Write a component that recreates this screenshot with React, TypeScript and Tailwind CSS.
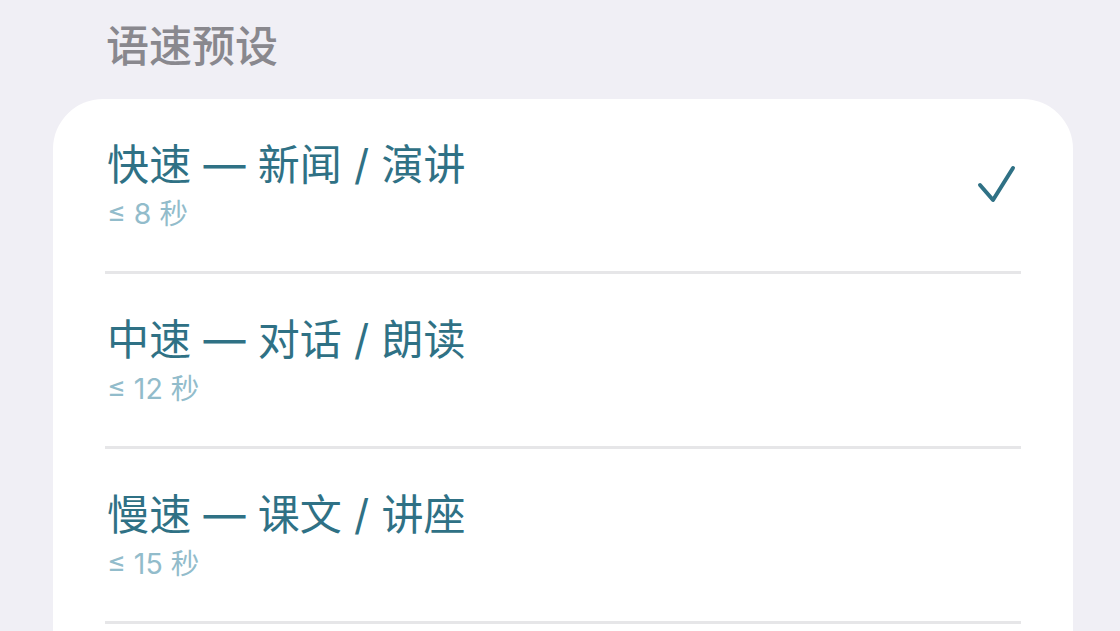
const PRESETS = [
  { title: '快速 — 新闻 / 演讲', limit: '≤ 8 秒', selected: true },
  { title: '中速 — 对话 / 朗读', limit: '≤ 12 秒', selected: false },
  { title: '慢速 — 课文 / 讲座', limit: '≤ 15 秒', selected: false },
];

function CheckMark() {
  return (
    <svg width="40" height="40" viewBox="0 0 40 40" fill="none" className="shrink-0">
      <polyline
        points="3,20 16,35 36,3"
        stroke="#2f7185"
        strokeWidth="4"
        strokeLinecap="round"
        strokeLinejoin="round"
      />
    </svg>
  );
}

export default function App() {
  return (
    <div
      className="h-[631px] w-[1120px] overflow-hidden bg-[#f0eff5]"
      style={{ fontFamily: 'Inter, "Noto Sans CJK SC", sans-serif' }}
    >
      <h2 className="pl-[106px] pt-[18px] text-[43px] font-medium leading-[56px] text-[#89888e]">语速预设</h2>

      <div className="ml-[53px] mr-[47px] mt-[25px] h-[600px] rounded-[50px] bg-white">
        {PRESETS.map((p) => (
          <div key={p.title}>
            <div className="flex h-[172px] items-center pl-[54px] pr-[56px]">
              <div className="flex-1">
                <p className="text-[42px] tracking-[0.2px] leading-[52px] text-[#2f7185]">{p.title}</p>
                <p className="mt-[5px] text-[28.5px] leading-[36px] text-[#92bccb]">{p.limit}</p>
              </div>
              {p.selected && <CheckMark />}
            </div>
            <div className="mx-[52px] h-[3px] bg-[#e6e6e8]" />
          </div>
        ))}
      </div>
    </div>
  );
}
